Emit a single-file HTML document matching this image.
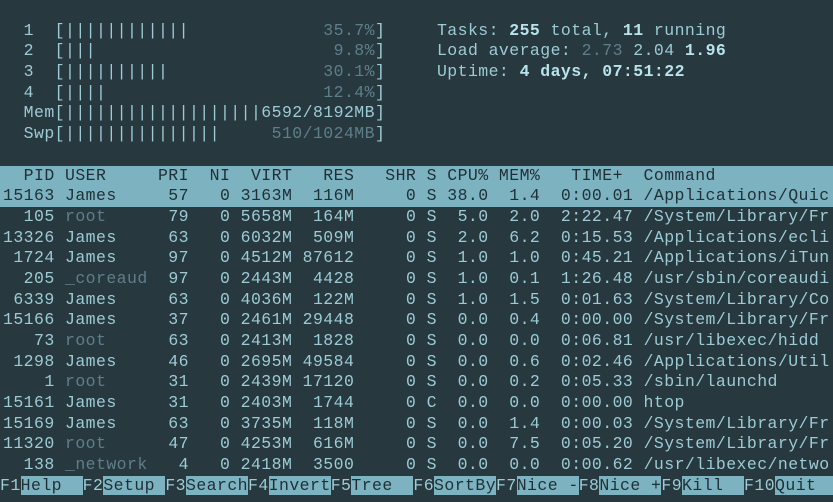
<!DOCTYPE html>
<html><head><meta charset="utf-8"><style>
html,body{margin:0;padding:0;background:#27383f;width:833px;height:502px;overflow:hidden}
.t{position:absolute;left:3px;top:0;font-family:"Liberation Mono",monospace;font-size:16.5px;letter-spacing:0.43px;color:#9ccbd6}
.l{height:20.7px;line-height:20.7px;white-space:pre}
.hl{background:#7db2c0;color:#1f3036;margin-left:-3px;padding-left:3px;width:830px}
.d{color:#5e7f8a}
.b{color:#b8e2ec;font-weight:bold}
.k{background:#7db2c0;color:#1f3036}
</style></head><body><div class="t">
<div class="l"> </div>
<div class="l">  1  [||||||||||||             <span class="d">35.7%</span>]     Tasks: <span class="b">255</span> total, <span class="b">11</span> running</div>
<div class="l">  2  [|||                       <span class="d">9.8%</span>]     Load average: <span class="d">2.73</span> 2.04 <span class="b">1.96</span></div>
<div class="l">  3  [||||||||||               <span class="d">30.1%</span>]     Uptime: <span class="b">4 days, 07:51:22</span></div>
<div class="l">  4  [||||                     <span class="d">12.4%</span>]</div>
<div class="l">  Mem[|||||||||||||||||||6592/8192MB]</div>
<div class="l">  Swp[|||||||||||||||     <span class="d">510/1024MB</span>]</div>
<div class="l"> </div>
<div class="l hl">  PID USER     PRI  NI  VIRT   RES   SHR S CPU% MEM%   TIME+  Command</div>
<div class="l hl">15163 James     57   0 3163M  116M     0 S 38.0  1.4  0:00.01 /Applications/Quic</div>
<div class="l">  105 <span class="d">root</span>      79   0 5658M  164M     0 S  5.0  2.0  2:22.47 /System/Library/Fr</div>
<div class="l">13326 James     63   0 6032M  509M     0 S  2.0  6.2  0:15.53 /Applications/ecli</div>
<div class="l"> 1724 James     97   0 4512M 87612     0 S  1.0  1.0  0:45.21 /Applications/iTun</div>
<div class="l">  205 <span class="d">_coreaud</span>  97   0 2443M  4428     0 S  1.0  0.1  1:26.48 /usr/sbin/coreaudi</div>
<div class="l"> 6339 James     63   0 4036M  122M     0 S  1.0  1.5  0:01.63 /System/Library/Co</div>
<div class="l">15166 James     37   0 2461M 29448     0 S  0.0  0.4  0:00.00 /System/Library/Fr</div>
<div class="l">   73 <span class="d">root</span>      63   0 2413M  1828     0 S  0.0  0.0  0:06.81 /usr/libexec/hidd</div>
<div class="l"> 1298 James     46   0 2695M 49584     0 S  0.0  0.6  0:02.46 /Applications/Util</div>
<div class="l">    1 <span class="d">root</span>      31   0 2439M 17120     0 S  0.0  0.2  0:05.33 /sbin/launchd</div>
<div class="l">15161 James     31   0 2403M  1744     0 C  0.0  0.0  0:00.00 htop</div>
<div class="l">15169 James     63   0 3735M  118M     0 S  0.0  1.4  0:00.03 /System/Library/Fr</div>
<div class="l">11320 <span class="d">root</span>      47   0 4253M  616M     0 S  0.0  7.5  0:05.20 /System/Library/Fr</div>
<div class="l">  138 <span class="d">_network</span>   4   0 2418M  3500     0 S  0.0  0.0  0:00.62 /usr/libexec/netwo</div>
<div class="l" style="margin-left:-3px">F1<span class="k">Help  </span>F2<span class="k">Setup </span>F3<span class="k">Search</span>F4<span class="k">Invert</span>F5<span class="k">Tree  </span>F6<span class="k">SortBy</span>F7<span class="k">Nice -</span>F8<span class="k">Nice +</span>F9<span class="k">Kill  </span>F10<span class="k">Quit  </span></div>
</div></body></html>
